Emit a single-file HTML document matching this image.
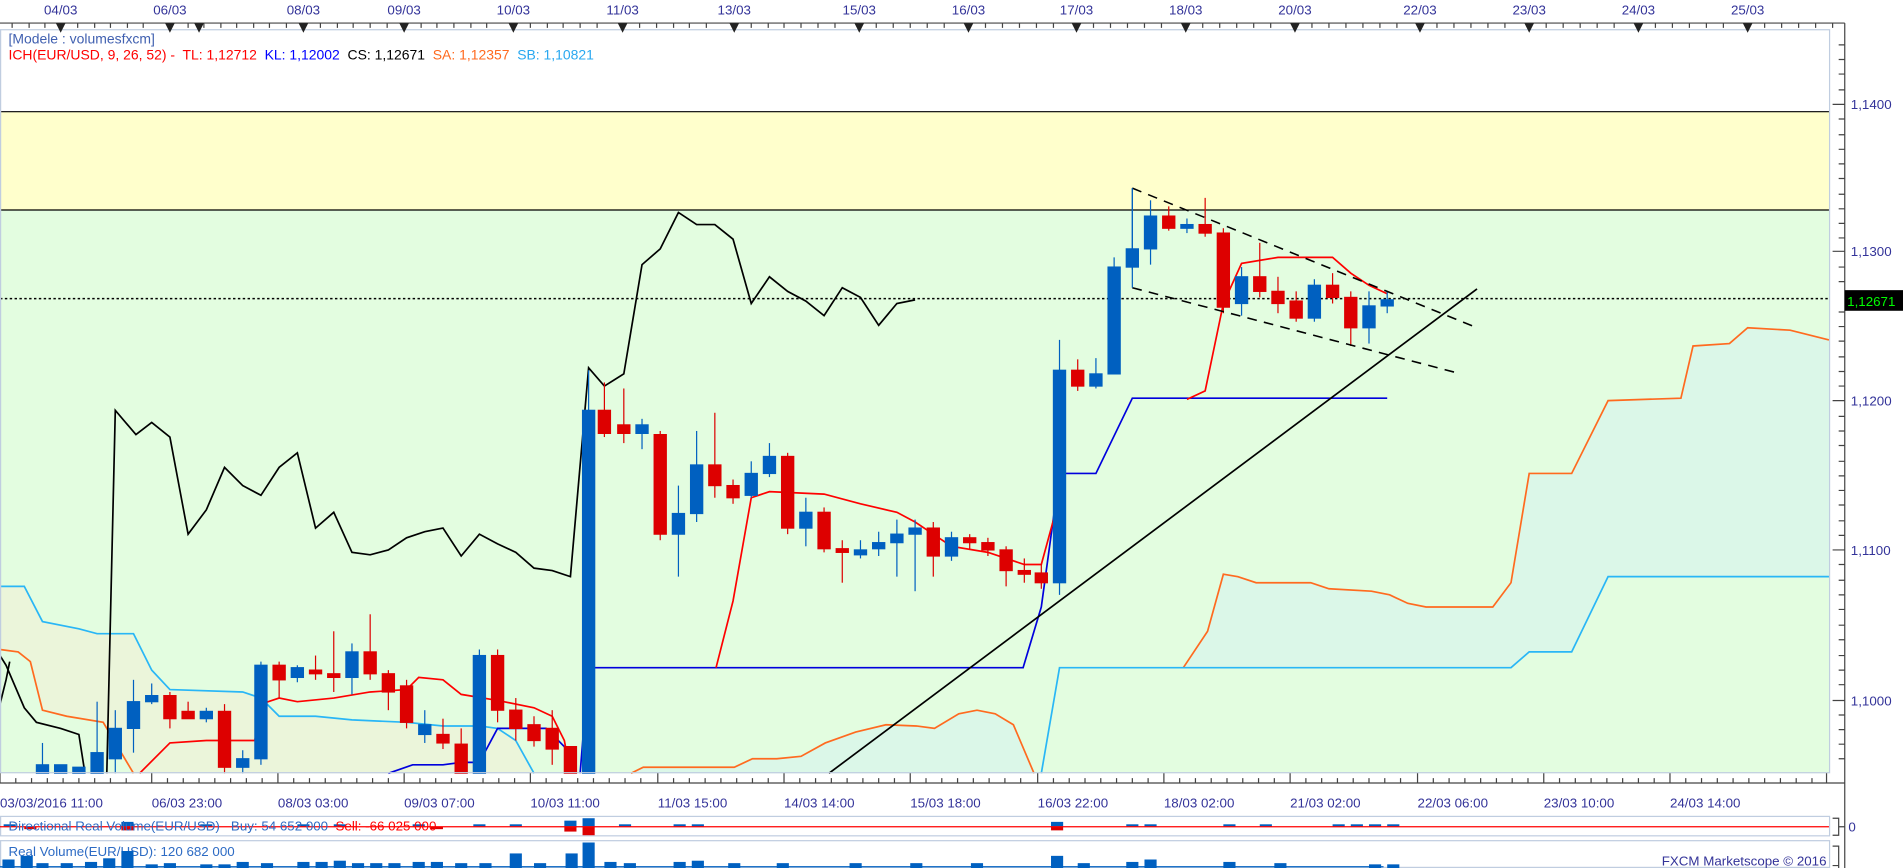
<!DOCTYPE html>
<html><head><meta charset="utf-8"><style>
html,body{margin:0;padding:0;background:#fff;overflow:hidden}
svg{display:block}
text{font-family:"Liberation Sans","DejaVu Sans",sans-serif}
</style></head><body>
<svg width="1903" height="868" viewBox="0 0 1568 715" preserveAspectRatio="none" xmlns="http://www.w3.org/2000/svg">
<rect x="0" y="0" width="1568" height="715" fill="#fff"/>
<rect x="0" y="24" width="1507" height="68" fill="#fff"/>
<rect x="0" y="92" width="1507" height="81" fill="#ffffcc"/>
<rect x="0" y="173" width="1507" height="464" fill="#e3fde0"/>
<polygon points="0,483 20,483 35,512 65,518 80,522 110,522 125,552 140,568 200,570 215,575 230,590 260,590 290,593 335,595 365,598 395,598 410,600 425,610 440,637 110,637 85,595 55,590 35,585 25,545 15,537 0,535" fill="#ebf5da"/>
<polygon points="520,637 530,632 605,632 620,625 640,625 660,623 680,612 705,603 730,597 755,598 770,600 790,588 805,585 820,588 835,597 852,637" fill="#dbf7e8"/>
<polygon points="975,550 995,520 1008,473 1020,475 1035,480 1080,480 1095,485 1130,487 1145,490 1160,497 1175,500 1230,500 1245,480 1260,390 1295,390 1325,330 1385,328 1395,285 1425,283 1440,270 1475,272 1507,280 1507,475 1325,475 1295,537 1260,537 1245,550" fill="#dbf7e8"/>
<line x1="0" y1="92" x2="1507" y2="92" stroke="#000" stroke-width="1"/>
<line x1="0" y1="173" x2="1507" y2="173" stroke="#000" stroke-width="1"/>
<line x1="0" y1="246" x2="1507" y2="246" stroke="#000" stroke-width="1.3" stroke-dasharray="2,2"/>
<g fill="none" stroke-width="1.4">
<polyline stroke="#ff6a1f" points="0,535 15,537 25,545 35,585 55,590 85,595 110,637"/>
<polyline stroke="#ff6a1f" points="520,637 530,632 605,632 620,625 640,625 660,623 680,612 705,603 730,597 755,598 770,600 790,588 805,585 820,588 835,597 852,637"/>
<polyline stroke="#ff6a1f" points="975,550 995,520 1008,473 1020,475 1035,480 1080,480 1095,485 1130,487 1145,490 1160,497 1175,500 1230,500 1245,480 1260,390 1295,390 1325,330 1385,328 1395,285 1425,283 1440,270 1475,272 1507,280"/>
<polyline stroke="#29b6f6" points="0,483 20,483 35,512 65,518 80,522 110,522 125,552 140,568 200,570 215,575 230,590 260,590 290,593 335,595 365,598 395,598 410,600 425,610 440,637"/>
<polyline stroke="#29b6f6" points="858,637 873,550 1245,550 1260,537 1295,537 1325,475 1507,475"/>
<polyline stroke="#0000dd" points="320,637 340,630 365,630 380,628 395,628 410,600 450,600 465,615 475,637"/>
<polyline stroke="#0000dd" points="478,637 485,550 843,550 858,500 873,390 903,390 933,328 1143,328"/>
<polyline stroke="#ff0000" points="115,637 140,612 170,610 210,610 215,580 230,575 245,578 275,575 305,570 335,568 345,558 365,560 380,572 410,577 440,583 455,590 465,610 470,637"/>
<polyline stroke="#ff0000" points="590,550 604,495 619,410 634,405 679,407 709,415 739,422 754,430 769,440 784,450 814,455 844,465 858,465 873,410"/>
<polyline stroke="#ff0000" points="978,329 993,322 1008,250 1023,217 1053,212 1083,212 1098,212 1113,225 1128,235 1143,242"/>
<polyline stroke="#000" points="0,540 5,548 20,583 30,595 50,600 65,605 70,637"/>
<polyline stroke="#000" points="0,580 5,560 8,545"/>
<polyline stroke="#000" points="88,637 95,338 112,358 125,348 140,360 155,440 170,420 185,385 200,400 215,408 230,385 245,373 260,435 275,422 290,455 305,457 320,453 335,443 350,438 365,435 380,458 395,440 410,448 425,455 440,468 455,470 470,475 485,303 498,318 514,308 529,218 544,205 559,175 574,185 589,185 604,197 619,250 634,228 649,240 664,248 679,260 694,237 709,245 724,268 739,250 754,247"/>
</g>
<g fill="#0060c0" stroke="#0060c0" stroke-width="1">
<line x1="35" y1="612" x2="35" y2="637"/><rect x="30" y="630" width="10" height="7"/>
<rect x="45" y="630" width="10" height="7"/>
<rect x="60" y="632" width="10" height="5"/>
<line x1="80" y1="578" x2="80" y2="637"/><rect x="75" y="620" width="10" height="17"/>
<line x1="95" y1="585" x2="95" y2="637"/><rect x="90" y="600" width="10" height="25"/>
<line x1="110" y1="560" x2="110" y2="620"/><rect x="105" y="578" width="10" height="22"/>
<line x1="125" y1="563" x2="125" y2="580"/><rect x="120" y="573" width="10" height="5"/>
<line x1="170" y1="583" x2="170" y2="595"/><rect x="165" y="586" width="10" height="6"/>
<line x1="200" y1="618" x2="200" y2="637"/><rect x="195" y="625" width="10" height="7"/>
<line x1="215" y1="545" x2="215" y2="630"/><rect x="210" y="548" width="10" height="77"/>
<line x1="245" y1="548" x2="245" y2="562"/><rect x="240" y="550" width="10" height="8"/>
<line x1="290" y1="530" x2="290" y2="572"/><rect x="285" y="537" width="10" height="21"/>
<line x1="350" y1="585" x2="350" y2="612"/><rect x="345" y="597" width="10" height="8"/>
<line x1="395" y1="535" x2="395" y2="637"/><rect x="390" y="540" width="10" height="97"/>
<line x1="485" y1="305" x2="485" y2="637"/><rect x="480" y="338" width="10" height="299"/>
<line x1="529" y1="345" x2="529" y2="370"/><rect x="524" y="350" width="10" height="7"/>
<line x1="559" y1="400" x2="559" y2="475"/><rect x="554" y="423" width="10" height="17"/>
<line x1="574" y1="355" x2="574" y2="430"/><rect x="569" y="383" width="10" height="40"/>
<line x1="619" y1="380" x2="619" y2="410"/><rect x="614" y="390" width="10" height="18"/>
<line x1="634" y1="365" x2="634" y2="393"/><rect x="629" y="376" width="10" height="14"/>
<line x1="664" y1="410" x2="664" y2="450"/><rect x="659" y="422" width="10" height="13"/>
<line x1="709" y1="445" x2="709" y2="460"/><rect x="704" y="453" width="10" height="4"/>
<line x1="724" y1="438" x2="724" y2="458"/><rect x="719" y="447" width="10" height="5"/>
<line x1="739" y1="428" x2="739" y2="475"/><rect x="734" y="440" width="10" height="7"/>
<line x1="754" y1="428" x2="754" y2="487"/><rect x="749" y="435" width="10" height="5"/>
<line x1="784" y1="438" x2="784" y2="462"/><rect x="779" y="443" width="10" height="15"/>
<line x1="873" y1="280" x2="873" y2="490"/><rect x="868" y="305" width="10" height="175"/>
<line x1="903" y1="295" x2="903" y2="320"/><rect x="898" y="308" width="10" height="10"/>
<line x1="918" y1="212" x2="918" y2="308"/><rect x="913" y="220" width="10" height="88"/>
<line x1="933" y1="155" x2="933" y2="222"/><rect x="928" y="205" width="10" height="15"/>
<line x1="948" y1="165" x2="948" y2="218"/><rect x="943" y="178" width="10" height="27"/>
<line x1="978" y1="180" x2="978" y2="192"/><rect x="973" y="185" width="10" height="3"/>
<line x1="1023" y1="220" x2="1023" y2="260"/><rect x="1018" y="228" width="10" height="22"/>
<line x1="1083" y1="230" x2="1083" y2="265"/><rect x="1078" y="235" width="10" height="27"/>
<line x1="1128" y1="240" x2="1128" y2="283"/><rect x="1123" y="252" width="10" height="18"/>
<line x1="1143" y1="240" x2="1143" y2="258"/><rect x="1138" y="247" width="10" height="5"/>
</g>
<g fill="#dd0000" stroke="#dd0000" stroke-width="1">
<line x1="140" y1="570" x2="140" y2="600"/><rect x="135" y="573" width="10" height="19"/>
<line x1="155" y1="578" x2="155" y2="592"/><rect x="150" y="586" width="10" height="6"/>
<line x1="185" y1="580" x2="185" y2="637"/><rect x="180" y="586" width="10" height="46"/>
<line x1="230" y1="545" x2="230" y2="575"/><rect x="225" y="548" width="10" height="12"/>
<line x1="260" y1="540" x2="260" y2="560"/><rect x="255" y="552" width="10" height="3"/>
<line x1="275" y1="520" x2="275" y2="570"/><rect x="270" y="555" width="10" height="3"/>
<line x1="305" y1="506" x2="305" y2="560"/><rect x="300" y="537" width="10" height="18"/>
<line x1="320" y1="552" x2="320" y2="585"/><rect x="315" y="555" width="10" height="15"/>
<line x1="335" y1="560" x2="335" y2="600"/><rect x="330" y="565" width="10" height="30"/>
<line x1="365" y1="592" x2="365" y2="617"/><rect x="360" y="605" width="10" height="7"/>
<line x1="380" y1="600" x2="380" y2="637"/><rect x="375" y="613" width="10" height="24"/>
<line x1="410" y1="535" x2="410" y2="595"/><rect x="405" y="540" width="10" height="45"/>
<line x1="425" y1="575" x2="425" y2="610"/><rect x="420" y="585" width="10" height="15"/>
<line x1="440" y1="590" x2="440" y2="615"/><rect x="435" y="597" width="10" height="13"/>
<line x1="455" y1="585" x2="455" y2="630"/><rect x="450" y="600" width="10" height="17"/>
<rect x="465" y="615" width="10" height="22"/>
<line x1="498" y1="315" x2="498" y2="360"/><rect x="493" y="338" width="10" height="19"/>
<line x1="514" y1="320" x2="514" y2="365"/><rect x="509" y="350" width="10" height="7"/>
<line x1="544" y1="355" x2="544" y2="445"/><rect x="539" y="358" width="10" height="82"/>
<line x1="589" y1="340" x2="589" y2="410"/><rect x="584" y="383" width="10" height="17"/>
<line x1="604" y1="395" x2="604" y2="415"/><rect x="599" y="400" width="10" height="10"/>
<line x1="649" y1="373" x2="649" y2="440"/><rect x="644" y="376" width="10" height="59"/>
<line x1="679" y1="418" x2="679" y2="455"/><rect x="674" y="422" width="10" height="30"/>
<line x1="694" y1="445" x2="694" y2="480"/><rect x="689" y="452" width="10" height="3"/>
<line x1="769" y1="430" x2="769" y2="475"/><rect x="764" y="435" width="10" height="23"/>
<line x1="799" y1="440" x2="799" y2="452"/><rect x="794" y="443" width="10" height="4"/>
<line x1="814" y1="443" x2="814" y2="458"/><rect x="809" y="447" width="10" height="6"/>
<line x1="829" y1="450" x2="829" y2="483"/><rect x="824" y="453" width="10" height="17"/>
<line x1="844" y1="460" x2="844" y2="480"/><rect x="839" y="470" width="10" height="3"/>
<line x1="858" y1="465" x2="858" y2="485"/><rect x="853" y="472" width="10" height="8"/>
<line x1="888" y1="296" x2="888" y2="322"/><rect x="883" y="305" width="10" height="13"/>
<line x1="963" y1="170" x2="963" y2="190"/><rect x="958" y="178" width="10" height="10"/>
<line x1="993" y1="163" x2="993" y2="195"/><rect x="988" y="185" width="10" height="7"/>
<line x1="1008" y1="188" x2="1008" y2="258"/><rect x="1003" y="192" width="10" height="61"/>
<line x1="1038" y1="200" x2="1038" y2="245"/><rect x="1033" y="228" width="10" height="12"/>
<line x1="1053" y1="228" x2="1053" y2="258"/><rect x="1048" y="240" width="10" height="10"/>
<line x1="1068" y1="240" x2="1068" y2="265"/><rect x="1063" y="248" width="10" height="14"/>
<line x1="1098" y1="225" x2="1098" y2="250"/><rect x="1093" y="235" width="10" height="10"/>
<line x1="1113" y1="240" x2="1113" y2="285"/><rect x="1108" y="245" width="10" height="25"/>
</g>
<line x1="683" y1="637" x2="1217" y2="238" stroke="#000" stroke-width="1.4"/>
<line x1="933" y1="155" x2="1217" y2="270" stroke="#000" stroke-width="1.3" stroke-dasharray="8,6"/>
<line x1="933" y1="237" x2="1200" y2="307" stroke="#000" stroke-width="1.3" stroke-dasharray="8,6"/>
<line x1="933" y1="155" x2="933" y2="237" stroke="#0060c0" stroke-width="1"/>
<rect x="0.5" y="24.5" width="1507" height="612" fill="none" stroke="#c0cde0" stroke-width="1"/>
<text x="7" y="36" font-size="11.5" fill="#4060b0">[Modele : volumesfxcm]</text>
<text x="7" y="49" font-size="11.5" xml:space="preserve"><tspan fill="#ff0000">ICH(EUR/USD, 9, 26, 52) -  TL: 1,12712 </tspan><tspan fill="#0000ff"> KL: 1,12002 </tspan><tspan fill="#000"> CS: 1,12671 </tspan><tspan fill="#ff6a1f"> SA: 1,12357 </tspan><tspan fill="#29a8f0"> SB: 1,10821</tspan></text>
<line x1="0" y1="19" x2="1520" y2="19" stroke="#444" stroke-width="1"/>
<line x1="1520" y1="19" x2="1520" y2="715" stroke="#444" stroke-width="1"/>
<g stroke="#444" stroke-width="1">
<path d="M10 19v4M24 19v4M37 19v4M64 19v4M78 19v4M91 19v4M105 19v4M118 19v4M155 19v4M168 19v4M182 19v4M195 19v4M209 19v4M222 19v4M236 19v4M264 19v4M278 19v4M291 19v4M305 19v4M319 19v4M347 19v4M360 19v4M374 19v4M388 19v4M401 19v4M437 19v4M451 19v4M464 19v4M478 19v4M492 19v4M527 19v4M541 19v4M555 19v4M568 19v4M582 19v4M619 19v4M633 19v4M646 19v4M660 19v4M674 19v4M688 19v4M722 19v4M736 19v4M750 19v4M764 19v4M778 19v4M812 19v4M826 19v4M840 19v4M854 19v4M868 19v4M901 19v4M915 19v4M929 19v4M943 19v4M957 19v4M991 19v4M1005 19v4M1019 19v4M1033 19v4M1047 19v4M1081 19v4M1095 19v4M1109 19v4M1123 19v4M1137 19v4M1151 19v4M1184 19v4M1198 19v4M1212 19v4M1226 19v4M1240 19v4M1274 19v4M1288 19v4M1302 19v4M1316 19v4M1330 19v4M1364 19v4M1378 19v4M1392 19v4M1406 19v4M1420 19v4M1454 19v4M1468 19v4M1482 19v4M1496 19v4M1510 19v4"/>
</g>
<g fill="#222">
<path d="M46 19h8l-4 8z M136 19h8l-4 8z M160 19h8l-4 8z M246 19h8l-4 8z M329 19h8l-4 8z M419 19h8l-4 8z M509 19h8l-4 8z M601 19h8l-4 8z M704 19h8l-4 8z M794 19h8l-4 8z M883 19h8l-4 8z M973 19h8l-4 8z M1063 19h8l-4 8z M1166 19h8l-4 8z M1256 19h8l-4 8z M1346 19h8l-4 8z M1436 19h8l-4 8z"/>
</g>
<g font-size="11" fill="#333399" text-anchor="middle">
<text x="50" y="12">04/03</text><text x="140" y="12">06/03</text><text x="250" y="12">08/03</text><text x="333" y="12">09/03</text><text x="423" y="12">10/03</text><text x="513" y="12">11/03</text><text x="605" y="12">13/03</text><text x="708" y="12">15/03</text><text x="798" y="12">16/03</text><text x="887" y="12">17/03</text><text x="977" y="12">18/03</text><text x="1067" y="12">20/03</text><text x="1170" y="12">22/03</text><text x="1260" y="12">23/03</text><text x="1350" y="12">24/03</text><text x="1440" y="12">25/03</text>
</g>
<g stroke="#444" stroke-width="1">
<path d="M1510 86h10M1510 207h10M1510 330h10M1510 453h10M1510 577h10 M1515 37h5M1515 49h5M1515 61h5M1515 74h5M1515 98h5M1515 111h5M1515 123h5M1515 135h5M1515 147h5M1515 160h5M1515 172h5M1515 184h5M1515 196h5M1515 220h5M1515 232h5M1515 257h5M1515 269h5M1515 281h5M1515 294h5M1515 306h5M1515 318h5M1515 343h5M1515 355h5M1515 367h5M1515 380h5M1515 392h5M1515 404h5M1515 416h5M1515 429h5M1515 441h5M1515 465h5M1515 478h5M1515 490h5M1515 502h5M1515 515h5M1515 527h5M1515 540h5M1515 552h5M1515 564h5M1515 589h5M1515 601h5M1515 613h5M1515 625h5"/>
</g>
<g font-size="11" fill="#333399">
<text x="1525" y="90">1,1400</text><text x="1525" y="211">1,1300</text><text x="1525" y="334">1,1200</text><text x="1525" y="457">1,1100</text><text x="1525" y="581">1,1000</text>
</g>
<rect x="1520" y="239" width="48" height="17" fill="#000"/>
<text x="1522" y="252" font-size="11" fill="#00ff00">1,12671</text>
<line x1="0" y1="645" x2="1520" y2="645" stroke="#444" stroke-width="1"/>
<g stroke="#444" stroke-width="1">
<path d="M0 637v8M125 637v8M229 637v8M333 637v8M437 637v8M542 637v8M646 637v8M750 637v8M855 637v8M959 637v8M1063 637v8M1168 637v8M1272 637v8M1376 637v8M1505 637v8"/>
<path d="M13 641v4M26 641v4M39 641v4M52 641v4M65 641v4M78 641v4M91 641v4M104 641v4M138 641v4M151 641v4M164 641v4M177 641v4M190 641v4M203 641v4M216 641v4M242 641v4M255 641v4M268 641v4M281 641v4M294 641v4M307 641v4M320 641v4M346 641v4M359 641v4M372 641v4M385 641v4M398 641v4M411 641v4M424 641v4M450 641v4M463 641v4M476 641v4M489 641v4M502 641v4M515 641v4M528 641v4M555 641v4M568 641v4M581 641v4M594 641v4M607 641v4M620 641v4M633 641v4M659 641v4M672 641v4M685 641v4M698 641v4M711 641v4M724 641v4M737 641v4M763 641v4M776 641v4M789 641v4M802 641v4M815 641v4M828 641v4M841 641v4M868 641v4M881 641v4M894 641v4M907 641v4M920 641v4M933 641v4M946 641v4M972 641v4M985 641v4M998 641v4M1011 641v4M1024 641v4M1037 641v4M1050 641v4M1076 641v4M1089 641v4M1102 641v4M1115 641v4M1128 641v4M1141 641v4M1154 641v4M1181 641v4M1194 641v4M1207 641v4M1220 641v4M1233 641v4M1246 641v4M1259 641v4M1285 641v4M1298 641v4M1311 641v4M1324 641v4M1337 641v4M1350 641v4M1363 641v4M1389 641v4M1402 641v4M1415 641v4M1428 641v4M1441 641v4M1454 641v4M1467 641v4M1480 641v4M1493 641v4"/>
</g>
<g font-size="11" fill="#333399">
<text x="0" y="665">03/03/2016 11:00</text><text x="125" y="665">06/03 23:00</text><text x="229" y="665">08/03 03:00</text><text x="333" y="665">09/03 07:00</text><text x="437" y="665">10/03 11:00</text><text x="542" y="665">11/03 15:00</text><text x="646" y="665">14/03 14:00</text><text x="750" y="665">15/03 18:00</text><text x="855" y="665">16/03 22:00</text><text x="959" y="665">18/03 02:00</text><text x="1063" y="665">21/03 02:00</text><text x="1168" y="665">22/03 06:00</text><text x="1272" y="665">23/03 10:00</text><text x="1376" y="665">24/03 14:00</text>
</g>
<rect x="0.5" y="672.5" width="1507" height="16" fill="#fff" stroke="#c0cde0"/>
<g fill="#0060c0">
<rect x="3" y="679" width="10" height="2"/><rect x="100" y="677" width="10" height="4"/><rect x="165" y="679" width="10" height="2"/><rect x="245" y="679" width="10" height="2"/><rect x="275" y="679" width="10" height="2"/><rect x="340" y="679" width="10" height="2"/><rect x="390" y="679" width="10" height="2"/><rect x="420" y="679" width="10" height="2"/><rect x="465" y="676" width="10" height="5"/><rect x="480" y="674" width="10" height="7"/><rect x="510" y="679" width="10" height="2"/><rect x="555" y="679" width="10" height="2"/><rect x="570" y="679" width="10" height="2"/><rect x="866" y="677" width="10" height="4"/><rect x="928" y="679" width="10" height="2"/><rect x="943" y="679" width="10" height="2"/><rect x="1008" y="679" width="10" height="2"/><rect x="1038" y="679" width="10" height="2"/><rect x="1098" y="679" width="10" height="2"/><rect x="1113" y="679" width="10" height="2"/><rect x="1128" y="679" width="10" height="2"/><rect x="1143" y="679" width="10" height="2"/>
</g>
<g fill="#dd0000">
<rect x="465" y="681" width="10" height="4"/><rect x="480" y="681" width="10" height="7"/><rect x="866" y="681" width="10" height="3"/><rect x="100" y="681" width="10" height="3"/><rect x="20" y="681" width="10" height="2"/><rect x="355" y="681" width="10" height="2"/>
</g>
<line x1="0" y1="681" x2="1507" y2="681" stroke="#ff0000" stroke-width="1"/>
<text x="7" y="684" font-size="11" xml:space="preserve"><tspan fill="#2d6bc4">Directional Real Volume(EUR/USD)   Buy: 54 652 000 </tspan><tspan fill="#ff0000"> Sell: -66 025 000</tspan></text>
<path d="M1510 674h5v14h-5M1515 681h5" stroke="#444" fill="none"/>
<text x="1523" y="685" font-size="11" fill="#333399">0</text>
<rect x="0.5" y="692.5" width="1507" height="22" fill="#fff" stroke="#c0cde0"/>
<text x="7" y="705" font-size="11" fill="#2d6bc4">Real Volume(EUR/USD): 120 682 000</text>
<g fill="#0060c0">
<rect x="2" y="708" width="10" height="7"/><rect x="17" y="705" width="10" height="10"/><rect x="30" y="711" width="10" height="4"/><rect x="50" y="711" width="10" height="4"/><rect x="70" y="710" width="10" height="5"/><rect x="85" y="707" width="10" height="8"/><rect x="100" y="701" width="10" height="14"/><rect x="120" y="712" width="10" height="3"/><rect x="135" y="711" width="10" height="4"/><rect x="165" y="712" width="10" height="3"/><rect x="180" y="712" width="10" height="3"/><rect x="195" y="710" width="10" height="5"/><rect x="215" y="711" width="10" height="4"/><rect x="245" y="710" width="10" height="5"/><rect x="260" y="710" width="10" height="5"/><rect x="275" y="709" width="10" height="6"/><rect x="290" y="711" width="10" height="4"/><rect x="305" y="711" width="10" height="4"/><rect x="320" y="711" width="10" height="4"/><rect x="340" y="710" width="10" height="5"/><rect x="355" y="710" width="10" height="5"/><rect x="375" y="711" width="10" height="4"/><rect x="395" y="711" width="10" height="4"/><rect x="420" y="703" width="10" height="12"/><rect x="440" y="711" width="10" height="4"/><rect x="466" y="703" width="10" height="12"/><rect x="480" y="694" width="10" height="21"/><rect x="498" y="710" width="10" height="5"/><rect x="514" y="711" width="10" height="4"/><rect x="555" y="710" width="10" height="5"/><rect x="570" y="709" width="10" height="6"/><rect x="600" y="711" width="10" height="4"/><rect x="640" y="711" width="10" height="4"/><rect x="700" y="711" width="10" height="4"/><rect x="750" y="711" width="10" height="4"/><rect x="800" y="711" width="10" height="4"/><rect x="866" y="705" width="10" height="10"/><rect x="888" y="711" width="10" height="4"/><rect x="928" y="710" width="10" height="5"/><rect x="943" y="708" width="10" height="7"/><rect x="1008" y="710" width="10" height="5"/><rect x="1050" y="711" width="10" height="4"/><rect x="1128" y="712" width="10" height="3"/><rect x="1143" y="712" width="10" height="3"/>
</g>
<line x1="0" y1="714" x2="1140" y2="714" stroke="#0060c0" stroke-width="1"/>
<text x="1505" y="713" font-size="11" fill="#333399" text-anchor="end">FXCM Marketscope © 2016</text>
<path d="M1510 697h5v18M1510 713h5" stroke="#444" fill="none"/>
</svg>
</body></html>
